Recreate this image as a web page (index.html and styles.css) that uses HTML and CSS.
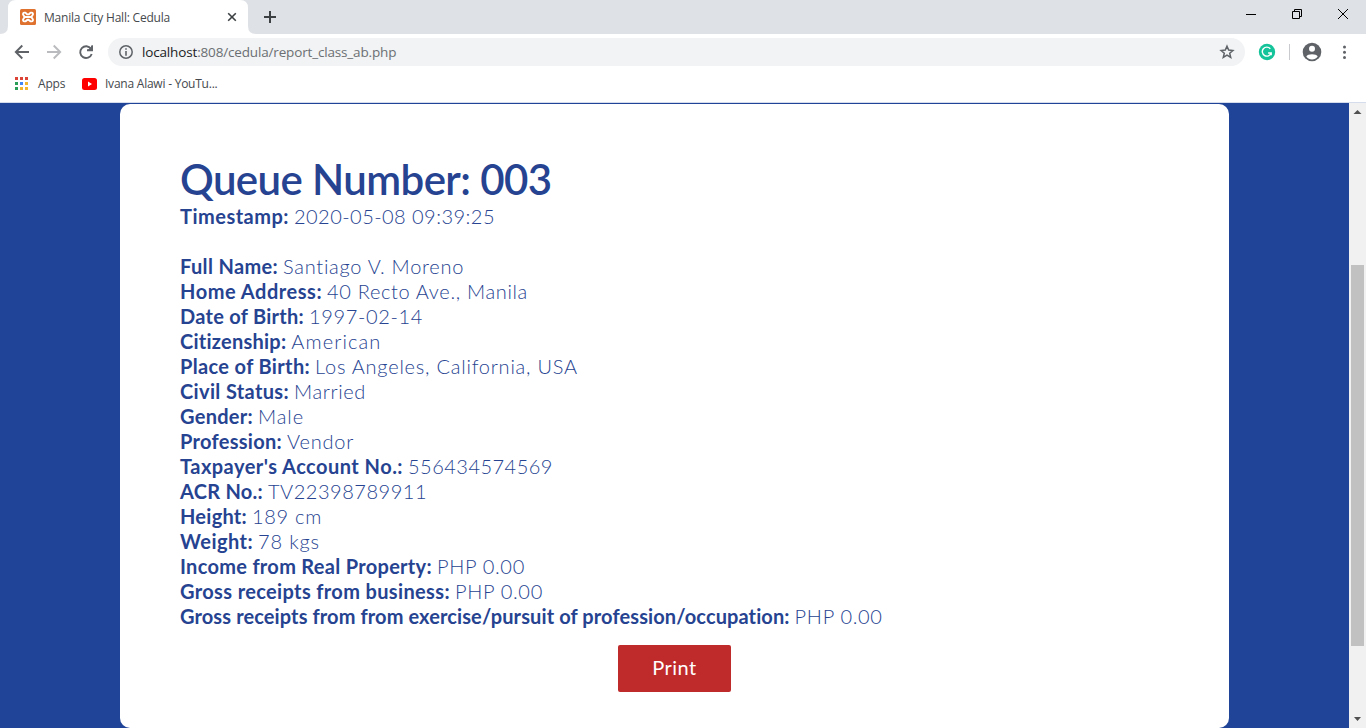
FILE: index.html
```
<!DOCTYPE html>
<html lang="en"><head><meta charset="utf-8"><title>Manila City Hall: Cedula</title><link rel="stylesheet" href="styles.css"></head>
<body>
<div class="browser">
<header class="tabs">
<svg class="tab-shape" width="264" height="34" viewBox="0 0 264 34"><path d="M0 34Q8 34 8 26V8Q8 0 16 0H240Q248 0 248 8V26Q248 34 256 34Z" fill="#fff"/></svg>
<div class="tab">
<svg width="16" height="16" viewBox="0 0 16 16"><rect width="16" height="16" rx="1.500" fill="#df722f"/><path d="M5.300 3.700C3 3.200 2.300 5 3.700 6.600L4.800 8 3.700 9.400c-1.400 1.600-.7 3.400 1.600 2.900 1.200-.3 1.200-1.500 2.700-1.500s1.500 1.200 2.700 1.500c2.300.5 3-1.300 1.600-2.900L11.200 8l1.100-1.400c1.400-1.600.7-3.400-1.600-2.900-1.200.3-1.200 1.700-2.700 1.700S6.500 4 5.300 3.700zM5 8h6" fill="none" stroke="#fff" stroke-width="1.900"/></svg>
<span class="tab-title">Manila City Hall: Cedula</span>
<svg class="tab-close" width="10" height="10" viewBox="0 0 10 10"><path d="M1.200 1.200l7.600 7.600M8.800 1.200L1.200 8.800" stroke="#3c4043" stroke-width="1.600"/></svg>
<svg class="tab-new" width="12" height="12" viewBox="0 0 12 12"><path d="M6 0v12M0 6h12" stroke="#3c4043" stroke-width="2"/></svg>
</div>
<svg class="window-buttons" width="120" height="34" viewBox="1246 0 120 34"><g fill="none" stroke="#000"><path d="M1246 14.500h10M1292.500 11.500h7v7h-7zM1294.500 11.500v-2h7v7h-2M1338 9l10 10M1348 9l-10 10"/></g></svg>
</header>
<div class="toolbar">
<svg width="80" height="20" viewBox="14 42 80 20"><g fill="none" stroke="#5f6368" stroke-width="1.900"><path d="M29 52H16M22.300 45.500L15.800 52l6.500 6.500"/><path stroke="#b9bbbe" d="M47 52h13M53.700 45.500l6.500 6.500-6.500 6.500"/><path d="M91 48.800A5.900 5.900 0 1 0 91.700 54M92 45.500v4.800h-5"/></g><path d="M92.800 45v6h-6z" fill="#5f6368"/></svg>
<div class="address"><svg width="14" height="14" viewBox="0 0 14 14"><circle cx="7" cy="7" r="6.200" fill="none" stroke="#5f6368" stroke-width="1.500"/><path d="M7 3.200v1.600M7 6v4.800" stroke="#5f6368" stroke-width="1.600"/></svg><span class="url"><b>localhost</b>:808/cedula/report_class_ab.php</span>
<svg class="star" width="16" height="16" viewBox="0 0 16 16"><path d="M8 2.200l1.700 3.900 4.200.4-3.200 2.800 1 4.100L8 11.200l-3.700 2.200 1-4.100-3.200-2.800 4.200-.4z" fill="none" stroke="#5f6368" stroke-width="1.500"/></svg></div>
<svg class="tools" width="100" height="22" viewBox="1256 41 100 22"><circle cx="1267" cy="52" r="8.200" fill="#15c39a"/><path d="M1270.300 48.800a4.500 4.500 0 1 0 .8 4.200h-3M1271.200 53v2.300" fill="none" stroke="#fff" stroke-width="1.400"/><path d="M1289.500 44v16" stroke="#c8cacd"/><circle cx="1312" cy="52" r="9.300" fill="#5f6368"/><circle cx="1312" cy="48.800" r="3" fill="#fff"/><path d="M1306.300 56.500c1.200-3 10.200-3 11.400 0a7 7 0 0 1-11.400 0z" fill="#fff"/><g fill="#5f6368"><circle cx="1344.500" cy="47" r="1.500"/><circle cx="1344.500" cy="52.300" r="1.500"/><circle cx="1344.500" cy="57.600" r="1.500"/></g></svg>
</div>
<nav class="bookmarks"><svg width="13" height="13" viewBox="0 0 13 13"><path d="M0 0h3v3H0zM5 0h3v3H5zM10 0h3v3h-3z" fill="#dc4437"/><path d="M0 5h3v3H0zM0 10h3v3H0z" fill="#2a9d57"/><path d="M5 5h3v3H5z" fill="#4285f4"/><path d="M10 5h3v3h-3zM5 10h3v3H5zM10 10h3v3h-3z" fill="#f2b52b"/></svg><span class="apps">Apps</span><svg width="15" height="12" viewBox="0 0 15 12"><rect width="15" height="12" rx="2.500" fill="#f00"/><path d="M6 3.500L10 6 6 8.500z" fill="#fff"/></svg><span class="bm">Ivana Alawi - YouTu...</span></nav>
<main class="viewport"><section class="card">
<h1>Queue Number: 003</h1>
<dl class="record">
<div class="row stamp"><dt>Timestamp:</dt><dd>2020-05-08 09:39:25</dd></div>
<div class="row full-name"><dt>Full Name:</dt><dd>Santiago V. Moreno</dd></div>
<div class="row home"><dt>Home Address:</dt><dd>40 Recto Ave., Manila</dd></div>
<div class="row birth-date"><dt>Date of Birth:</dt><dd>1997-02-14</dd></div>
<div class="row citizenship"><dt>Citizenship:</dt><dd>American</dd></div>
<div class="row birth-place"><dt>Place of Birth:</dt><dd>Los Angeles, California, USA</dd></div>
<div class="row civil"><dt>Civil Status:</dt><dd>Married</dd></div>
<div class="row gender"><dt>Gender:</dt><dd>Male</dd></div>
<div class="row profession"><dt>Profession:</dt><dd>Vendor</dd></div>
<div class="row tax"><dt>Taxpayer's Account No.:</dt><dd>556434574569</dd></div>
<div class="row acr"><dt>ACR No.:</dt><dd>TV22398789911</dd></div>
<div class="row height"><dt>Height:</dt><dd>189 cm</dd></div>
<div class="row weight"><dt>Weight:</dt><dd>78 kgs</dd></div>
<div class="row money income"><dt>Income from Real Property:</dt><dd>PHP 0.00</dd></div>
<div class="row money business"><dt>Gross receipts from business:</dt><dd>PHP 0.00</dd></div>
<div class="row money occupation"><dt>Gross receipts from from exercise/pursuit of profession/occupation:</dt><dd>PHP 0.00</dd></div>
</dl><button class="print" type="button">Print</button>
</section>
<div class="scrollbar"><svg width="17" height="17" viewBox="0 0 17 17"><path d="M4.500 11L8.500 7l4 4z" fill="#505050"/></svg><i class="thumb"></i><svg width="17" height="17" viewBox="0 0 17 17"><path d="M5 6l3.500 4L12 6z" fill="#505050"/></svg></div>
</main></div>
</body></html>
```
FILE: styles.css
```
*{box-sizing:border-box}
body{margin:0;font-family:"Open Sans",sans-serif}
svg{display:block;flex:none}
.browser{width:1366px;height:728px;overflow:hidden;display:flex;flex-direction:column;background:#fff}
.tabs{height:34px;background:#dee1e6;position:relative;display:flex;justify-content:space-between}
.tab-shape{position:absolute;left:0;top:0}
.tab{position:relative;display:flex;align-items:center;padding-left:20px;height:34px}
.tab-title{margin-left:8px;width:126px;font-size:12px;letter-spacing:-.22px;white-space:nowrap;color:#45494d}
.tab-close{margin-left:57px}.tab-new{margin-left:27px}
.toolbar{height:36px;display:flex;align-items:center;padding-left:14px}
.address{margin-left:14px;width:1137px;height:28px;border-radius:14px;background:#f1f3f4;display:flex;align-items:center;padding:0 10px 0 11px}
.url{margin-left:9px;font-size:13.5px;letter-spacing:-.16px;color:#6b6f73;white-space:nowrap}.url b{font-weight:400;color:#202124}
.star{margin-left:auto}.tools{margin-left:11px}
.bookmarks{height:33px;display:flex;align-items:center;padding:0 0 5px 15px;font-size:12px;color:#45494d;border-bottom:1px solid #d5dcec}
.apps{margin-left:10px;width:28px;margin-right:16px;letter-spacing:-.2px}.bm{margin-left:8px;letter-spacing:-.23px;white-space:nowrap}
.viewport{height:625px;background:#204497;display:flex;padding:1px 0 0 120px}
.card{width:1109px;height:624px;background:#fff;border-radius:10px;padding:50px 60px 0;font-family:Lato,sans-serif;font-variant-ligatures:none;color:#264391}
h1{margin:0;font-size:42px;line-height:50px;font-weight:600;letter-spacing:-.6px;white-space:nowrap}
.record{margin:0;font-size:20px;line-height:25px}
.row{display:flex;gap:5px;white-space:nowrap}
dt{font-weight:700;letter-spacing:var(--label)}
dd{margin:0;font-weight:300;letter-spacing:var(--value)}
/* Letter spacing per field, for the label and its value */
.stamp{margin-bottom:25px;--label:.49px;--value:.46px}
.full-name{--label:.34px;--value:.74px}
.home{--label:.53px;--value:.67px}
.birth-date{--label:.27px;--value:.64px}
.citizenship{--label:.24px;--value:1.1px}
.birth-place{--label:.35px;--value:.78px}
.civil{--label:.35px;--value:.64px}
.gender{--label:.29px;--value:.91px}
.profession{--label:.29px;--value:.77px}
.tax{--label:.47px;--value:.48px}
.acr{--label:.26px;--value:.52px}
.height{--label:.26px;--value:.71px}
.weight{--label:.45px;--value:.85px}
.money{--value:.68px}
.income{--label:.3px}
.business{--label:.36px}
.occupation{--label:.11px}
.print{display:block;margin:16px auto 0;width:113px;height:47px;padding:0 0 4px;border:0;border-radius:2px;background:#bf2b2b;color:#fff;font:400 20px Lato,sans-serif;letter-spacing:.5px}
.scrollbar{margin:-1px 0 0 auto;width:17px;height:625px;background:#f1f1f1;display:flex;flex-direction:column}
.thumb{width:13px;height:381px;margin:145px 0 65px 2px;background:#c1c1c1}
```
